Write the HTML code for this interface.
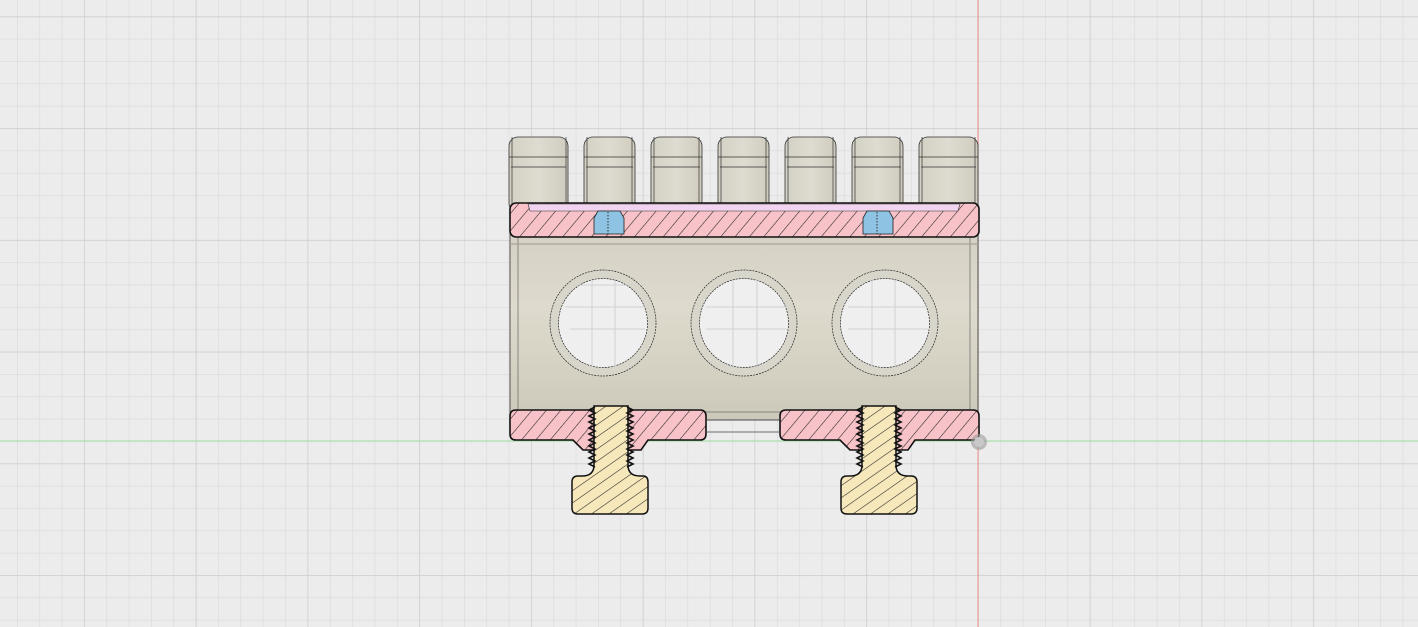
<!DOCTYPE html>
<html><head><style>html,body{margin:0;padding:0;background:#ececec;overflow:hidden}svg{display:block}</style></head>
<body>
<svg width="1418" height="627" viewBox="0 0 1418 627" xmlns="http://www.w3.org/2000/svg">
<defs>
<pattern id="minor" x="17" y="16.4" width="22.35" height="22.35" patternUnits="userSpaceOnUse">
<path d="M0 0V22.35M0 0H22.35" stroke="#d9d9d9" stroke-width="1.2" fill="none"/>
</pattern>
<pattern id="major" x="84" y="16.4" width="111.75" height="111.75" patternUnits="userSpaceOnUse">
<path d="M0 0V111.75M0 0H111.75" stroke="#cdcdcd" stroke-width="1.4" fill="none"/>
</pattern>
<pattern id="hatch" width="11" height="11" patternUnits="userSpaceOnUse" patternTransform="rotate(40)">
<rect width="11" height="11" fill="#f7c2c8"/><line x1="0" y1="0" x2="0" y2="11" stroke="#222" stroke-width="1.1"/>
</pattern>
<pattern id="hatchY" width="10" height="10" patternUnits="userSpaceOnUse" patternTransform="rotate(55)">
<rect width="10" height="10" fill="#f6e8bb"/><line x1="0" y1="0" x2="0" y2="10" stroke="#222" stroke-width="1.1"/>
</pattern>
<linearGradient id="body" x1="0" y1="0" x2="0" y2="1">
<stop offset="0" stop-color="#d4d0c3"/><stop offset="0.4" stop-color="#dedacd"/><stop offset="1" stop-color="#cdc9ba"/>
</linearGradient>
<linearGradient id="tooth" x1="0" y1="0" x2="1" y2="0">
<stop offset="0" stop-color="#d3d0c4"/><stop offset="0.5" stop-color="#dedbd0"/><stop offset="1" stop-color="#cfccbf"/>
</linearGradient>
</defs>
<rect width="1418" height="627" fill="#ececec"/>
<rect width="1418" height="627" fill="url(#minor)"/>
<rect width="1418" height="627" fill="url(#major)"/>
<line x1="0" y1="441" x2="1418" y2="441" stroke="#9fdc9f" stroke-width="1"/>
<line x1="978" y1="0" x2="978" y2="627" stroke="#ef8f8f" stroke-width="1"/>

<!-- teeth -->
<g stroke="#333" stroke-width="0.8" fill="url(#tooth)">
<rect x="509" y="137" width="59" height="75" rx="9"/>
<rect x="584" y="137" width="51" height="75" rx="9"/>
<rect x="651" y="137" width="51" height="75" rx="9"/>
<rect x="718" y="137" width="51" height="75" rx="9"/>
<rect x="785" y="137" width="51" height="75" rx="9"/>
<rect x="852" y="137" width="51" height="75" rx="9"/>
<rect x="919" y="137" width="59" height="75" rx="9"/>
</g>
<g stroke="#333" stroke-width="0.7" fill="none">
<path d="M509 157H568M584 157H635M651 157H702M718 157H769M785 157H836M852 157H903M919 157H978"/>
<path d="M511 167H566M586 167H633M653 167H700M720 167H767M787 167H834M854 167H901M921 167H976"/>
<path d="M512 137V205M566 137V205M587 137V205M632 137V205M654 137V205M699 137V205M721 137V205M766 137V205M788 137V205M833 137V205M855 137V205M900 137V205M922 137V205M975 137V205"/>
</g>

<!-- body -->
<rect x="510" y="230" width="468" height="190" fill="url(#body)" stroke="#333" stroke-width="0.8"/>
<rect x="518" y="236" width="452" height="176" fill="none" stroke="#555" stroke-width="0.6"/>
<line x1="510" y1="244" x2="978" y2="244" stroke="#aaa49a" stroke-width="1.2"/>
<g stroke="#222" stroke-width="0.7" stroke-dasharray="2 1">
<circle cx="603" cy="323" r="53" fill="#d8d5ca"/>
<circle cx="744" cy="323" r="53" fill="#d8d5ca"/>
<circle cx="885" cy="323" r="53" fill="#d8d5ca"/>
<circle cx="603" cy="323" r="44.5" fill="#efefef"/>
<circle cx="744" cy="323" r="44.5" fill="#efefef"/>
<circle cx="885" cy="323" r="44.5" fill="#efefef"/>
</g>
<g stroke="#d2d2d2" stroke-width="1">
<path d="M565 307H650M569 285H647M570 329H645M592 281V368M615 280V368 M706 307H790M706 329H790M733 280V368M757 280V368M848 307H930M848 329H930M872 280V368M895 280V368"/>
</g>

<!-- top pink bar -->
<rect x="510" y="203" width="469" height="34" rx="6" fill="url(#hatch)" stroke="#111" stroke-width="1.6"/>
<path d="M528 204H960L958 211H530Z" fill="#f2d4f0" stroke="#333" stroke-width="0.6"/>
<path d="M598 211H620L624 218V234H594V218Z" fill="#8fc3e3" stroke="#222" stroke-width="0.8"/>
<path d="M867 211H889L893 218V234H863V218Z" fill="#8fc3e3" stroke="#222" stroke-width="0.8"/>
<line x1="608" y1="212" x2="608" y2="236" stroke="#333" stroke-dasharray="1.5 1.5"/>
<line x1="877" y1="212" x2="877" y2="236" stroke="#333" stroke-dasharray="1.5 1.5"/>

<!-- bottom pink parts -->
<path d="M516 410H700Q706 410 706 416V434Q706 440 700 440H648L641 450H583L573 440H516Q510 440 510 434V416Q510 410 516 410Z" fill="url(#hatch)" stroke="#111" stroke-width="1.6"/>
<path d="M786 410H973Q979 410 979 416V434Q979 440 973 440H915L908 450H850L840 440H786Q780 440 780 434V416Q780 410 786 410Z" fill="url(#hatch)" stroke="#111" stroke-width="1.6"/>
<line x1="706" y1="420" x2="780" y2="420" stroke="#444" stroke-width="0.8"/>
<line x1="706" y1="432" x2="780" y2="432" stroke="#444" stroke-width="0.8"/>

<!-- screws -->
<g fill="url(#hatchY)" stroke="#111" stroke-width="1.5">
<path d="M594 406H628V465Q628 476 640 476H643Q648 476 648 482V508Q648 514 642 514H578Q572 514 572 508V482Q572 476 578 476H582Q594 476 594 465Z"/>
<path d="M862 406H896V465Q896 476 908 476H911Q917 476 917 482V508Q917 514 911 514H847Q841 514 841 508V482Q841 476 847 476H850Q862 476 862 465Z"/>
</g>
<g fill="none" stroke="#111" stroke-width="1.6">
<path d="M595 407l-6 3 6 3-6 3 6 3-6 3 6 3-6 3 6 3-6 3 6 3-6 3 6 3-6 3 6 3-6 3 6 3-6 3 6 3-6 3 6 3"/>
<path d="M627 407l6 3-6 3 6 3-6 3 6 3-6 3 6 3-6 3 6 3-6 3 6 3-6 3 6 3-6 3 6 3-6 3 6 3-6 3 6 3-6 3"/>
<path d="M863 407l-6 3 6 3-6 3 6 3-6 3 6 3-6 3 6 3-6 3 6 3-6 3 6 3-6 3 6 3-6 3 6 3-6 3 6 3-6 3 6 3"/>
<path d="M895 407l6 3-6 3 6 3-6 3 6 3-6 3 6 3-6 3 6 3-6 3 6 3-6 3 6 3-6 3 6 3-6 3 6 3-6 3 6 3-6 3"/>
</g>
<circle cx="979" cy="442" r="8" fill="#9a9a9a" opacity="0.6"/>
<circle cx="979" cy="442" r="5" fill="#c8c8c8"/>
</svg>
</body></html>
